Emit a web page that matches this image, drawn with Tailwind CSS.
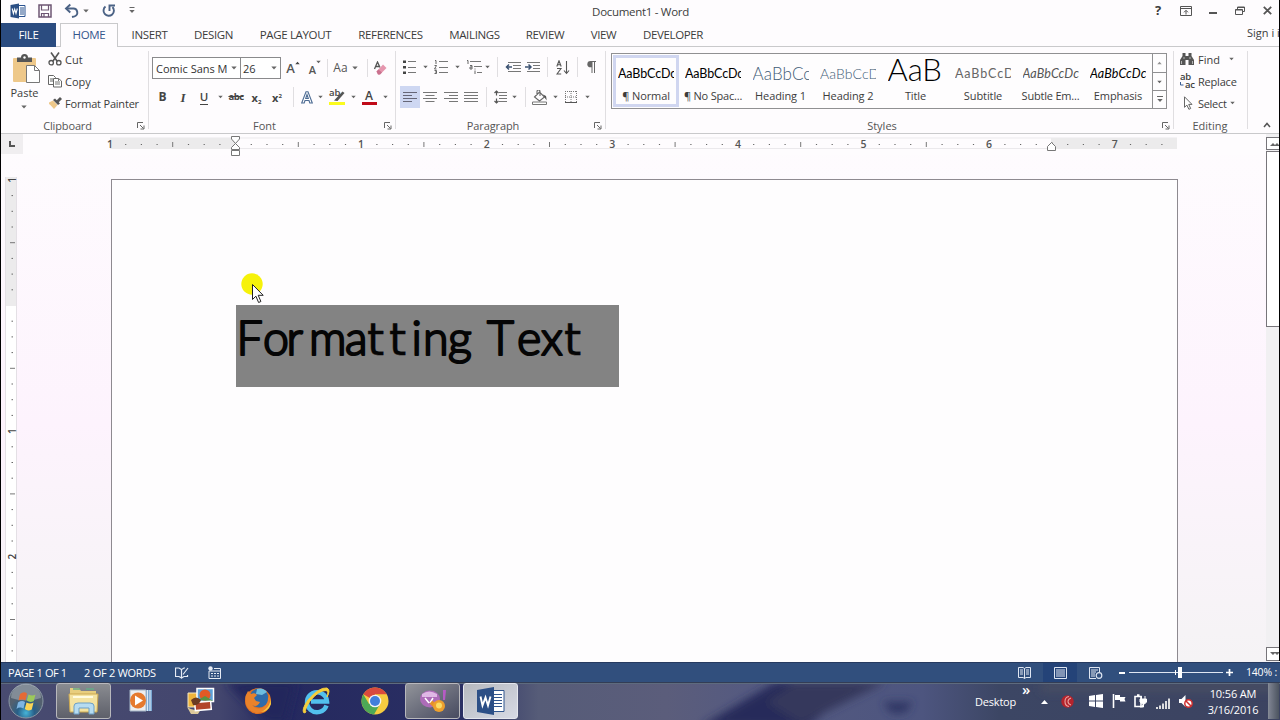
<!DOCTYPE html>
<html lang="en">
  <head>
    <meta charset="UTF-8" />
    <meta name="viewport" content="width=device-width, initial-scale=1.0" />
    <title>Document1 - Word</title>
    <script src="https://cdn.jsdelivr.net/npm/@tailwindcss/browser@4"></script>
  </head>
  <body class="w-[1280px] h-[720px] overflow-hidden bg-[#fefcfe] font-['Open_Sans','Noto_Sans',sans-serif] text-[11px] leading-none text-[#3c3c3c]">
    <!-- Shared icons -->
    <svg class="hidden">
      <symbol id="caret" viewBox="0 0 6 4"><path d="M0.3 0.4h5.4L3 3.6z" fill="#666" /></symbol>
      <symbol id="launcher" viewBox="0 0 8 8">
        <path d="M0.5 6V0.5H6M3 3l3.5 3.5M7 3.5V7H3.5" fill="none" stroke="#666" />
      </symbol>
    </svg>

    <div class="w-[1280px] h-[720px] border-l border-black flex flex-col relative">
      <!-- Title bar -->
      <header class="h-[23px] grid grid-cols-[1fr_auto_1fr] items-center">
        <div class="flex items-center h-5 -mt-[2px]">
          <div class="w-[34px] flex justify-center">
            <svg class="w-4 h-4" viewBox="0 0 16 16">
              <path d="M8 2.5h7v11H8z" fill="#fff" stroke="#2a5290" />
              <path d="M10 5h4M10 7h4M10 9h4M10 11h4" stroke="#2a5290" />
              <path d="M0.5 2L9 0.5v15L0.5 14z" fill="#2b4f85" />
              <path d="M2.2 5.5l1.2 5 1.3-4.4L6 10.500l1.300-5" fill="none" stroke="#fff" stroke-width="1.100" />
            </svg>
          </div>
          <div class="w-5 flex justify-center">
            <svg class="w-[14px] h-[14px]" viewBox="0 0 14 14">
              <path d="M1 1h12v12H1z" fill="#fff" stroke="#6d5673" stroke-width="1.500" />
              <path d="M3.500 1v5h7V1M3.500 13V9.500h7V13M6 10v3" fill="none" stroke="#6d5673" stroke-width="1.200" />
            </svg>
          </div>
          <div class="w-[34px] flex justify-center">
            <svg class="w-4 h-4" viewBox="0 0 16 16">
              <path d="M2.500 5.500h6.500a4 4 0 0 1 1.500 7.800L8 14" fill="none" stroke="#4b6285" stroke-width="1.900" />
              <path d="M6.300 1.500L2 5.500l4.300 4" fill="none" stroke="#4b6285" stroke-width="1.900" />
            </svg>
          </div>
          <svg class="w-[6px] h-1 -ml-[6px]"><use href="#caret" /></svg>
          <div class="w-10 flex justify-center">
            <svg class="w-4 h-4" viewBox="0 0 16 16">
              <path d="M4.500 3.500A5.200 5.200 0 1 0 11.500 4" fill="none" stroke="#4b6285" stroke-width="1.900" />
              <path d="M8.500 8V2.500H14" fill="none" stroke="#4b6285" stroke-width="1.900" />
            </svg>
          </div>
          <svg class="w-[6px] h-[7px]" viewBox="0 0 6 7"><path d="M0.500 0.500h5" stroke="#666" /><path d="M0.300 3h5.400L3 6z" fill="#666" /></svg>
        </div>
        <div class="text-[11.5px] tracking-[-0.3px] pt-px">Document1 - Word</div>
        <div class="flex items-center justify-end h-5 -mt-[2px]">
          <div class="w-7 text-center font-bold text-[13px]">?</div>
          <div class="w-[27px] flex justify-center">
            <svg class="w-3 h-[10px]" viewBox="0 0 12 10">
              <path d="M0.500 0.500h11v9H0.500zM0.500 2.500h11M6 8.500V4.500M4 6.300l2-2 2 2" fill="none" stroke="#555" />
            </svg>
          </div>
          <div class="w-[27px] flex justify-center"><div class="w-2 h-[2px] mt-[5px] bg-[#555]"></div></div>
          <div class="w-7 flex justify-center">
            <svg class="w-[10px] h-[9px]" viewBox="0 0 10 9">
              <path d="M2.500 3V1h7v4.500H7.500M2.500 1.500h7M0.500 3.500h7v5h-7zM0.500 4h7" fill="none" stroke="#555" />
            </svg>
          </div>
          <div class="w-[26px] flex justify-center">
            <svg class="w-[9px] h-[9px]" viewBox="0 0 9 9"><path d="M0.800 0.800l7.400 7.400M8.200 0.800L0.800 8.200" stroke="#555" stroke-width="1.800" /></svg>
          </div>
        </div>
      </header>

      <!-- Ribbon tabs -->
      <nav class="h-6 flex border-b border-[#c9c9cb] text-[11.5px] tracking-[-0.35px] relative">
        <div class="w-[55px] h-6 bg-[#2b4c80] text-white flex items-center justify-center">FILE</div>
        <div class="w-[58px] h-6 ml-1 border border-b-0 border-[#c9c9cb] bg-[#fefcfe] text-[#35568c] flex items-center justify-center pb-px">HOME</div>
        <div class="w-[63px] flex items-center justify-center">INSERT</div>
        <div class="w-[65px] flex items-center justify-center">DESIGN</div>
        <div class="w-[99px] flex items-center justify-center">PAGE LAYOUT</div>
        <div class="w-[91px] flex items-center justify-center">REFERENCES</div>
        <div class="w-[77px] flex items-center justify-center">MAILINGS</div>
        <div class="w-[64px] flex items-center justify-center">REVIEW</div>
        <div class="w-[53px] flex items-center justify-center">VIEW</div>
        <div class="w-[86px] flex items-center justify-center">DEVELOPER</div>
        <div class="ml-auto w-[33px] pt-1 text-[11px] tracking-normal whitespace-nowrap overflow-hidden">Sign i i</div>
      </nav>

      <!-- Ribbon -->
      <section class="h-[87px] flex border-b border-[#c9c9cb]">
        <!-- Clipboard -->
        <div class="w-[148px] flex flex-col relative">
          <div class="flex h-[71px]">
            <div class="w-[47px] flex flex-col items-center pt-[7px]">
              <svg class="w-7 h-[30px] ml-[3px]" viewBox="0 0 28 30">
                <rect x="1" y="4" width="23" height="24" rx="1" fill="#eec88a" />
                <path d="M5 3.500h4a3.500 3.500 0 0 1 7 0h4V8H5z" fill="#555" /><circle cx="12.500" cy="3.500" r="1.200" fill="#fff" />
                <path d="M14.500 11.500h8l5 5v12h-13z" fill="#fff" stroke="#777" /><path d="M22.500 11.500v5h5" fill="none" stroke="#777" />
              </svg>
              <span class="mt-[3px]">Paste</span>
              <svg class="w-[6px] h-1 mt-[7px] -ml-px"><use href="#caret" /></svg>
            </div>
            <div class="pt-px tracking-[-0.2px]">
              <div class="h-[22px] flex items-center gap-[3px]">
                <svg class="w-[14px] h-[14px]" viewBox="0 0 14 14">
                  <path d="M3 0.500l6 8.500M11 0.500L5 9" stroke="#555" stroke-width="1.600" />
                  <circle cx="3.200" cy="10.700" r="2.200" fill="none" stroke="#555" stroke-width="1.300" /><circle cx="10.800" cy="10.700" r="2.200" fill="none" stroke="#555" stroke-width="1.300" />
                </svg>
                <span class="tracking-normal">Cut</span>
              </div>
              <div class="h-[22px] flex items-center gap-[3px]">
                <svg class="w-[14px] h-[14px]" viewBox="0 0 14 14">
                  <path d="M0.500 1.500h5l2 2v7h-7zM2 5h3M2 7h3" fill="#fff" stroke="#666" />
                  <path d="M5.500 4.500h5l3 2.500v6h-8z" fill="#fff" stroke="#666" /><path d="M7 8h5M7 10h5M10.500 4.500V7" stroke="#777" fill="none" />
                </svg>
                <span class="tracking-normal">Copy</span>
              </div>
              <div class="h-[22px] flex items-center gap-[3px]">
                <svg class="w-[14px] h-[14px]" viewBox="0 0 14 14">
                  <path d="M1 6.500L5 4.500l4.500 4.500L6 13C4 10.500 3 9.500 1 8z" fill="#eec88a" />
                  <path d="M5 4l2-1.500 5 5L10 9z" fill="#555" /><path d="M8 5l4-4 2 2-4 4z" fill="#555" />
                </svg>
                <span>Format Painter</span>
              </div>
            </div>
          </div>
          <div class="flex h-[15px] items-center">
            <span class="flex-1 text-center text-[#555] pr-[3px] tracking-[-0.15px]">Clipboard</span>
            <svg class="w-2 h-2 mr-1"><use href="#launcher" /></svg>
          </div>
          <div class="absolute right-0 top-1 h-[78px] w-px bg-[#e0dee1]"></div>
        </div>

        <!-- Font -->
        <div class="w-[247px] flex flex-col relative">
          <div class="h-[71px] pl-[3px]">
            <div class="h-[22px] mt-[10px] flex items-center">
              <div class="w-[89px] -mr-px h-[22px] border border-[#8a8a8c] bg-white flex items-center pl-[3px] text-[#333]">
                <span class="w-[75px] whitespace-nowrap">Comic Sans M</span><svg class="w-[6px] h-1"><use href="#caret" /></svg>
              </div>
              <div class="w-[41px] h-[22px] border border-[#8a8a8c] bg-white flex items-center justify-between pl-[2px] pr-[3px] text-[#333]">
                <span>26</span><svg class="w-[6px] h-1"><use href="#caret" /></svg>
              </div>
              <div class="w-[24px] flex justify-center text-[13px] font-semibold text-[#555]">A<svg class="w-[5px] h-[4px] -mt-px" viewBox="0 0 6 4"><path d="M0.300 3.600h5.400L3 0.400z" fill="#444" /></svg></div>
              <div class="w-[20px] flex justify-center text-[11px] font-semibold text-[#555] pt-[2px]">A<svg class="w-[5px] h-1 -mt-1"><use href="#caret" /></svg></div>
              <div class="w-1 flex justify-center"><div class="w-px h-[18px] bg-[#e0dee1]"></div></div>
              <div class="w-[23px] text-center text-[12px] text-[#555]">Aa</div>
              <svg class="w-[6px] h-1"><use href="#caret" /></svg>
              <div class="w-3 ml-[3px] flex justify-center"><div class="w-px h-[18px] bg-[#e0dee1]"></div></div>
              <svg class="w-[15px] h-[15px]" viewBox="0 0 15 15">
                <path d="M1.500 8L4.500 1l2.500 5.500M2.500 5.500h4" fill="none" stroke="#555" stroke-width="1.300" />
                <path d="M3.500 10.500L10 3.500l3.500 3.500L7 13.500H5z" fill="#e596ae" /><path d="M3.500 10.500L5.500 8.500l3.500 3L7 13.500H5z" fill="#c9718e" />
              </svg>
            </div>
            <div class="h-[22px] mt-[7px] flex items-center text-[#444]">
              <div class="w-[21px] text-center font-bold text-[12px]">B</div>
              <div class="w-5 text-center font-['Liberation_Serif',serif] font-bold italic text-[13px]">I</div>
              <div class="w-[22px] text-center font-semibold text-[11.5px]"><span class="border-b border-[#444]">U</span></div>
              <div class="w-[10px] flex justify-center"><svg class="w-[5px] h-1"><use href="#caret" /></svg></div>
              <div class="w-[22px] text-center font-bold text-[9.5px] tracking-[-0.5px] line-through">abc</div>
              <div class="w-[19px] text-center font-bold text-[11px] whitespace-nowrap">x<span class="text-[6px] relative top-[2px]">2</span></div>
              <div class="w-[22px] text-center font-bold text-[11px] whitespace-nowrap">x<span class="text-[6px] relative -top-1">2</span></div>
              <div class="w-[10px] flex justify-center"><div class="w-px h-5 bg-[#e0dee1]"></div></div>
              <div class="w-[17px] flex justify-center">
                <svg class="w-3 h-[13px]" viewBox="0 0 12 13"><path d="M0.700 12L5 0.800h2L11.300 12H8.800L8 9.500H4L3.200 12zM4.700 7.500h2.600L6 3.500z" fill="#fff" stroke="#4e6c94" stroke-width="1.100" /></svg>
              </div>
              <div class="w-[10px] flex justify-center"><svg class="w-[5px] h-1"><use href="#caret" /></svg></div>
              <div class="w-6 flex justify-center">
                <div class="w-4 h-[15px] relative">
                  <span class="absolute left-0 -top-[2px] text-[9.5px] font-semibold">ab</span>
                  <svg class="absolute inset-0 w-4 h-[15px]" viewBox="0 0 16 15"><path d="M5 10.500L13.500 1.500l2 1.500L8.500 11z" fill="#555" /><path d="M0 12h16v3H0z" fill="#fbfb1e" /></svg>
                </div>
              </div>
              <div class="w-[9px] flex justify-center"><svg class="w-[5px] h-1"><use href="#caret" /></svg></div>
              <div class="w-[22px] flex justify-center">
                <div class="w-[15px] h-[15px] border-b-[3px] border-[#c00a18] text-center text-[12px] font-semibold leading-[11px]">A</div>
              </div>
              <div class="w-[10px] flex justify-center"><svg class="w-[5px] h-1"><use href="#caret" /></svg></div>
            </div>
          </div>
          <div class="flex h-[15px] items-center">
            <span class="flex-1 text-center text-[#555] pr-[4px]">Font</span>
            <svg class="w-2 h-2 mr-1"><use href="#launcher" /></svg>
          </div>
          <div class="absolute right-0 top-1 h-[78px] w-px bg-[#e0dee1]"></div>
        </div>

        <!-- Paragraph -->
        <div class="w-[210px] flex flex-col relative">
          <div class="h-[71px] pl-1">
            <div class="h-[22px] mt-[9px] flex items-center">
              <div class="w-[18px] flex justify-center">
                <svg class="w-[13px] h-[14px]" viewBox="0 0 13 14"><path d="M0 0.500h3v2.500H0zM0 6h3v2.500H0zM0 11.500h3V14H0z" fill="#444" /><path d="M5 1.500h8M5 7.500h8M5 12.500h8" stroke="#777" /></svg>
              </div>
              <div class="w-[14px] flex justify-center"><svg class="w-[5px] h-1"><use href="#caret" /></svg></div>
              <div class="w-[18px] flex justify-center">
                <svg class="w-[14px] h-[14px]" viewBox="0 0 14 14"><path d="M1 0.500h1V4M0.500 5.500h2L0.500 9h2M0.500 10.500h2v3h-2M1 12h1" fill="none" stroke="#555" stroke-width="0.900" /><path d="M5 1.500h9M5 7.500h9M5 12.500h9" stroke="#777" /></svg>
              </div>
              <div class="w-[14px] flex justify-center"><svg class="w-[5px] h-1"><use href="#caret" /></svg></div>
              <div class="w-[19px] flex justify-center">
                <svg class="w-4 h-[14px]" viewBox="0 0 16 14"><path d="M1 0.500h1V4M4 5.500h2V9H4V7h2M9 8.500v1M9 10.500V14" fill="none" stroke="#555" stroke-width="0.900" /><path d="M4 1.500h11M8 6.500h8M11 12.500h5" stroke="#777" /></svg>
              </div>
              <div class="w-2 flex justify-center"><svg class="w-[5px] h-1"><use href="#caret" /></svg></div>
              <div class="w-[13px] flex justify-center"><div class="w-px h-5 bg-[#e0dee1]"></div></div>
              <div class="w-[17px] flex justify-center">
                <svg class="w-4 h-[10px]" viewBox="0 0 16 10"><path d="M3 0.500h13M8 3.500h8M8 6.500h8M3 9.500h13" stroke="#777" /><path d="M7 5H1.500M4 2.500L1.500 5L4 7.500" stroke="#3c5272" stroke-width="1.500" fill="none" /></svg>
              </div>
              <div class="w-[24px] flex justify-center">
                <svg class="w-4 h-[10px]" viewBox="0 0 16 10"><path d="M2 0.500h13M8 3.500h7M8 6.500h7M2 9.500h13" stroke="#777" /><path d="M0 5h6M3.500 2.500L6 5L3.500 7.500" stroke="#3c5272" stroke-width="1.500" fill="none" /></svg>
              </div>
              <div class="w-[5px] flex justify-center"><div class="w-px h-5 bg-[#e0dee1]"></div></div>
              <div class="w-[25px] flex justify-center">
                <svg class="w-[14px] h-[15px]" viewBox="0 0 14 15"><path d="M0.800 6.500L3 0.800l2.200 5.700M1.500 4.800h3M1 8.500h4L1 14h4.200M10.500 1v12M8 10.500l2.500 3 2.500-3" fill="none" stroke="#555" stroke-width="1.100" /></svg>
              </div>
              <div class="w-1 flex justify-center"><div class="w-px h-5 bg-[#e0dee1]"></div></div>
              <div class="w-6 flex justify-center">
                <svg class="w-[9px] h-3" viewBox="0 0 9 12"><path d="M5 0H3.500a3 3 0 0 0 0 6.300H5z" fill="#666" /><path d="M4.500 0.500H9M5 0v12M7.500 0v12" stroke="#666" fill="none" /></svg>
              </div>
            </div>
            <div class="h-[22px] mt-2 flex items-center">
              <div class="w-5 h-[22px] flex items-center justify-center bg-[#ced7f2]">
                <svg class="w-[14px] h-[10px]" viewBox="0 0 14 10"><path d="M0 0.500h14M0 3.500h9M0 6.500h14M0 9.500h9" stroke="#667" /></svg>
              </div>
              <div class="w-5 flex justify-center"><svg class="w-[14px] h-[10px]" viewBox="0 0 14 10"><path d="M0 0.500h14M2.500 3.500h9M0 6.500h14M2.500 9.500h9" stroke="#777" /></svg></div>
              <div class="w-[21px] flex justify-center"><svg class="w-[14px] h-[10px]" viewBox="0 0 14 10"><path d="M0 0.500h14M5 3.500h9M0 6.500h14M5 9.500h9" stroke="#777" /></svg></div>
              <div class="w-5 flex justify-center"><svg class="w-[14px] h-[10px]" viewBox="0 0 14 10"><path d="M0 0.500h14M0 3.500h14M0 6.500h14M0 9.500h14" stroke="#777" /></svg></div>
              <div class="w-[10px] flex justify-center"><div class="w-px h-5 bg-[#e0dee1]"></div></div>
              <div class="w-[18px] flex justify-center">
                <svg class="w-[13px] h-[14px]" viewBox="0 0 13 14"><path d="M5 2.500h8M5 5.500h8M5 8.500h8M5 11.500h8" stroke="#777" /><path d="M2.500 1v4.500M0.500 3l2-2 2 2M2.500 8.500V13M0.500 11l2 2 2-2" fill="none" stroke="#555" stroke-width="1.200" /></svg>
              </div>
              <div class="w-[10px] flex justify-center"><svg class="w-[5px] h-1"><use href="#caret" /></svg></div>
              <div class="w-3 flex justify-center"><div class="w-px h-5 bg-[#e0dee1]"></div></div>
              <div class="w-[18px] flex justify-center">
                <svg class="w-4 h-[15px]" viewBox="0 0 16 15"><path d="M2.500 7L7.500 2l5 5-5 4zM5 5V1.500a1.500 1.500 0 0 1 3 0V6" fill="none" stroke="#666" stroke-width="1.100" /><path d="M11 4.500l3 1.500 0.800 4.500-2.300-3z" fill="#555" /><path d="M0.500 12h14v2.500H0.500z" fill="#fff" stroke="#777" /></svg>
              </div>
              <div class="w-3 flex justify-center"><svg class="w-[5px] h-1"><use href="#caret" /></svg></div>
              <div class="w-5 flex justify-center">
                <svg class="w-3 h-3" viewBox="0 0 12 12"><path d="M0.500 0v12M11.500 0v12M0 0.500h12M6 0v12M0 6h12" stroke="#777" stroke-dasharray="1 1" /><path d="M0 11.500h12" stroke="#555" /></svg>
              </div>
              <div class="w-3 flex justify-center"><svg class="w-[5px] h-1"><use href="#caret" /></svg></div>
            </div>
          </div>
          <div class="flex h-[15px] items-center">
            <span class="flex-1 text-center text-[#555] pr-[4px] tracking-[-0.1px]">Paragraph</span>
            <svg class="w-2 h-2 mr-1"><use href="#launcher" /></svg>
          </div>
          <div class="absolute right-0 top-1 h-[78px] w-px bg-[#e0dee1]"></div>
        </div>

        <!-- Styles -->
        <div class="w-[568px] flex flex-col relative">
          <div class="h-[71px] pl-[5px] pt-[6px]">
            <div class="w-[556px] h-[56px] border border-[#909092] bg-[#fefdfe] flex text-[11px] tracking-[-0.1px] text-center whitespace-nowrap">
              <div class="w-[66px] h-[52px] ml-px mt-px border-[3px] border-[#d0d6f0] pt-[7px]">
                <div class="w-[56px] h-[18px] mx-auto overflow-hidden text-left text-[12.5px] leading-[18px] text-black font-[Lato] tracking-[-0.1px]">AaBbCcDc</div>
                <div class="mt-[7px]">¶ Normal</div>
              </div>
              <div class="w-[68px] pt-[11px]">
                <div class="w-[56px] h-[18px] mx-auto overflow-hidden text-left text-[12.5px] leading-[18px] text-black font-[Lato] tracking-[-0.1px]">AaBbCcDc</div>
                <div class="mt-[7px] tracking-[-0.2px]">¶ No Spac...</div>
              </div>
              <div class="w-[67px] pt-[11px]">
                <div class="w-[56px] h-[18px] mx-auto overflow-hidden text-left text-[17px] leading-[18px] text-[#3f5c76] font-[Lato] font-light tracking-[0.1px]">AaBbCc</div>
                <div class="mt-[7px]">Heading 1</div>
              </div>
              <div class="w-[68px] pt-[11px]">
                <div class="w-[56px] h-[18px] mx-auto overflow-hidden text-left text-[14px] leading-[18px] text-[#3f5c76] font-[Lato] font-light tracking-[0.1px]">AaBbCcD</div>
                <div class="mt-[7px]">Heading 2</div>
              </div>
              <div class="w-[67px] pt-[3px]">
                <div class="w-[56px] h-[26px] mx-auto overflow-hidden text-left text-[31px] leading-[25px] text-black font-[Lato] font-light">AaB</div>
                <div class="mt-[7px]">Title</div>
              </div>
              <div class="w-[68px] pt-[11px]">
                <div class="w-[56px] h-[18px] mx-auto overflow-hidden text-left text-[12.5px] leading-[18px] text-[#666] font-[Lato] tracking-[0.9px]">AaBbCcD</div>
                <div class="mt-[7px]">Subtitle</div>
              </div>
              <div class="w-[67px] pt-[11px]">
                <div class="w-[56px] h-[18px] mx-auto overflow-hidden text-left text-[12.5px] leading-[18px] text-[#555] font-[Lato] italic tracking-[0.1px]">AaBbCcDc</div>
                <div class="mt-[7px] tracking-[-0.2px]">Subtle Em...</div>
              </div>
              <div class="w-[68px] pt-[11px]">
                <div class="w-[56px] h-[18px] mx-auto overflow-hidden text-left text-[12.5px] leading-[18px] text-black font-[Lato] italic tracking-[0.1px]">AaBbCcDc</div>
                <div class="mt-[7px]">Emphasis</div>
              </div>
              <div class="ml-auto w-[14px] border-l border-[#909092] flex flex-col">
                <div class="h-[18px] flex items-center justify-center"><svg class="w-[5px] h-1 rotate-180 opacity-70"><use href="#caret" /></svg></div>
                <div class="h-[18px] border-t border-[#909092] flex items-center justify-center"><svg class="w-[5px] h-1"><use href="#caret" /></svg></div>
                <div class="h-[18px] border-t border-[#909092] flex items-center justify-center"><svg class="w-[6px] h-[7px]" viewBox="0 0 6 7"><path d="M0 0.500h6" stroke="#666" /><path d="M0.300 3h5.400L3 6z" fill="#666" /></svg></div>
              </div>
            </div>
          </div>
          <div class="flex h-[15px] items-center">
            <span class="flex-1 text-center text-[#555] pr-[4px]">Styles</span>
            <svg class="w-2 h-2 mr-1"><use href="#launcher" /></svg>
          </div>
          <div class="absolute right-0 top-1 h-[78px] w-px bg-[#e0dee1]"></div>
        </div>

        <!-- Editing -->
        <div class="w-[74px] flex flex-col relative">
          <div class="h-[71px] pl-[6px] pt-px">
            <div class="h-[22px] flex items-center">
              <svg class="w-[14px] h-3 mr-[4px]" viewBox="0 0 14 12"><path d="M2.500 0h3v3h3V0h3v3l2.500 4v5H8.500V7h-3v5H0V7l2.500-4z" fill="#555" /><path d="M1.500 8v3M12.500 8v3M4 4v2M10 4v2" stroke="#ccc" stroke-width="0.800" /></svg>
              <span class="w-[31px]">Find</span><svg class="w-[5px] h-1"><use href="#caret" /></svg>
            </div>
            <div class="h-[22px] flex items-center">
              <div class="w-[14px] h-4 mr-[4px] text-[9.5px] leading-[8px] font-semibold tracking-[-0.3px] relative">
                <div>ab</div>
                <div class="pl-[5px]">ac</div>
                <svg class="absolute left-0 top-[9px] w-1 h-[5px]" viewBox="0 0 4 5"><path d="M0.500 0v3h3" stroke="#3b5f96" fill="none" /></svg>
              </div>
              <span class="tracking-[-0.2px]">Replace</span>
            </div>
            <div class="h-[22px] flex items-center">
              <svg class="w-[14px] h-[14px] mr-[4px]" viewBox="0 0 14 14"><path d="M4.500 0.800v10.500l2.400-2.200 2 4.200 1.800-0.800-2-4.100h3.300z" fill="#fff" stroke="#666" /></svg>
              <span class="w-[31px] tracking-[-0.3px]">Select</span><svg class="w-[5px] h-1 ml-px"><use href="#caret" /></svg>
            </div>
          </div>
          <div class="flex h-[15px] items-center"><span class="flex-1 text-center text-[#555] pr-[2px]">Editing</span></div>
          <div class="absolute right-0 top-1 h-[78px] w-px bg-[#e0dee1]"></div>
        </div>
        <div class="flex-1 flex items-end pl-[15px] pb-[5px]">
          <svg class="w-2 h-[6px]" viewBox="0 0 8 6"><path d="M1 5l3-3.500L7 5" fill="none" stroke="#555" stroke-width="1.500" /></svg>
        </div>
      </section>

      <!-- Document area -->
      <main class="h-[528px] flex bg-linear-to-b from-[#fefcfe] via-[#fdf3fd] via-55% to-[#f5f3f5]">
        <div class="flex-1 flex flex-col">
          <div class="h-[21px] flex bg-[#fefcfe]">
            <div class="w-[22px] h-[20px] bg-[#f0eef0] flex items-center justify-center">
              <svg class="w-[6px] h-[6px]" viewBox="0 0 6 6"><path d="M1 0v5h5" fill="none" stroke="#555" stroke-width="2" /></svg>
            </div>
            <svg id="h-ruler" class="w-[1200px] h-[25px] shrink-0 font-['Open_Sans',sans-serif]"></svg>
          </div>
          <div class="h-[507px] flex">
            <svg id="v-ruler" class="w-[17px] h-[507px] font-['Open_Sans',sans-serif]"></svg>
            <!-- Page -->
            <div class="ml-[93px] mt-6 w-[1067px] border border-b-0 border-[#8e8a90] bg-[#fefdfe] pt-[125px] pl-[124px]">
              <div class="w-[383px] h-[82px] bg-[#838383]">
                <svg class="w-[383px] h-[82px] font-[Lato] font-light" font-size="46.500">
                  <text y="50" fill="#050505" stroke="#050505" stroke-width="2.200" stroke-linejoin="round"
                    x="0.500 27 50.500 73 109 131 153 175.500 187 212 236 251 281 305 328"
                    >Forma<tspan class="font-['DejaVu_Sans'] font-normal" font-size="44" stroke-width="0.400">tt</tspan>ing Tex<tspan class="font-['DejaVu_Sans'] font-normal" font-size="44" stroke-width="0.400">t</tspan></text>
                </svg>
              </div>
            </div>
          </div>
        </div>
        <!-- Scrollbar -->
        <div class="w-[14px] h-[528px] bg-[#f1f0f2] flex flex-col pt-[3px]">
          <div class="h-[13px] border border-r-0 border-[#77757a] bg-white flex items-center justify-end"><svg class="w-[10px] h-1" viewBox="0 0 10 4"><path d="M0 4l3-3 2 2 2-2 3 3z" fill="#666" /></svg></div>
          <div class="h-[176px] mt-px border border-r-0 border-[#77757a] bg-white"></div>
          <div class="h-[14px] mt-auto mb-px border border-r-0 border-[#77757a] bg-white flex items-center justify-end"><svg class="w-[10px] h-1" viewBox="0 0 10 4"><path d="M0 0l3 3 2-2 2 2 3-3z" fill="#666" /></svg></div>
        </div>
      </main>

      <!-- Status bar -->
      <footer class="h-5 bg-[#314f7d] border-t border-[#263a60] flex items-center text-white text-[11px]">
        <span class="ml-[7px] w-[76px] whitespace-nowrap tracking-[-0.4px] pb-px">PAGE 1 OF 1</span>
        <span class="w-[91px] whitespace-nowrap tracking-[-0.25px] pb-px">2 OF 2 WORDS</span>
        <svg class="w-[14px] h-3" viewBox="0 0 14 12"><path d="M6.500 11L4 9.500H0.500V1H4l2.500 1.500zV2.500L9 1h1M6.500 11L9 9.500h3.500V8M8 7.500l5-6.500" fill="none" stroke="#e6ebf4" stroke-width="1.200" /></svg>
        <svg class="w-[13px] h-[13px] ml-[19px]" viewBox="0 0 13 13"><path d="M1 5h11.500v7.500H1zM6 2.500h6.500V5" fill="none" stroke="#e6ebf4" /><circle cx="2.500" cy="2.500" r="2.200" fill="#e6ebf4" /><path d="M3 7.500h8M3 10h8" stroke="#e6ebf4" stroke-dasharray="2 1" /></svg>
        <svg class="w-[13px] h-3 ml-auto" viewBox="0 0 13 12"><path d="M6.500 11.500V1.500L5 0.500H0.500v10H5zl1.500-1h4.500v-10H8L6.500 1.500M2 3h3M2 5h3M2 7h3M8 3h3M8 5h3M8 7h3" fill="none" stroke="#dfe6f2" /></svg>
        <div class="w-[34px] h-[19px] ml-[12px] bg-[#244378] flex items-center justify-center">
          <svg class="w-[13px] h-3" viewBox="0 0 13 12"><path d="M0.500 0.500h12v11H0.500zM2 3h9M2 5h9M2 7h9M2 9h9" fill="none" stroke="#dfe6f2" /></svg>
        </div>
        <svg class="w-[14px] h-3 ml-[12px]" viewBox="0 0 14 12"><path d="M7 11.500H0.500v-11h10V5M2 3h7M2 5h5M2 7h4M2 9h4" fill="none" stroke="#dfe6f2" /><circle cx="10" cy="8.500" r="2.800" fill="#314f7d" stroke="#dfe6f2" stroke-width="1.200" /></svg>
        <div class="w-[6px] h-[2px] ml-[16px] bg-white"></div>
        <div class="w-[94px] h-[11px] ml-1 flex items-center relative">
          <div class="w-full h-px bg-[#dfe6f2]"></div>
          <div class="absolute left-[46px] top-[3px] w-px h-[5px] bg-white"></div>
          <div class="absolute left-[49px] top-0 w-1 h-[11px] bg-white"></div>
        </div>
        <svg class="w-[7px] h-[7px] ml-[3px]" viewBox="0 0 7 7"><path d="M3.500 0v7M0 3.500h7" stroke="#fff" stroke-width="1.700" /></svg>
        <span class="ml-[13px] w-[34px] whitespace-nowrap text-[10.5px] tracking-[-0.2px]">140% :</span>
      </footer>

      <!-- Taskbar -->
      <div class="h-[38px] relative overflow-hidden bg-[#4d5479]">
        <svg class="absolute inset-0 w-[1280px] h-[38px]" viewBox="0 0 1280 38">
          <defs>
            <filter id="soft" x="-20%" y="-50%" width="140%" height="200%"><feGaussianBlur stdDeviation="4" /></filter>
            <linearGradient id="base" x1="0" x2="1">
              <stop offset="0" stop-color="#484b70" /><stop offset="0.17" stop-color="#43466e" /><stop offset="0.22" stop-color="#25295f" /><stop offset="0.36" stop-color="#2a2f63" />
              <stop offset="0.42" stop-color="#565c78" /><stop offset="0.52" stop-color="#5b5d7b" /><stop offset="0.58" stop-color="#555a80" /><stop offset="0.72" stop-color="#4d557f" /><stop offset="0.78" stop-color="#3c4664" /><stop offset="1" stop-color="#3c4361" />
            </linearGradient>
          </defs>
          <rect width="1280" height="38" fill="url(#base)" />
          <g filter="url(#soft)">
            <path d="M225 0h70l-10 40h-20z" fill="#20255c" />
            <path d="M700 44L775 0h55l10 16-35 30z" fill="#272a5a" />
            <path d="M800 42L885 0h-90l-30 20z" fill="#34375b" />
            <path d="M882 20h30l-8 11h-14z" fill="#2d3464" />
            <path d="M1040 0h240v10h-240z" fill="#474d63" />
          </g>
          <path d="M0 0.500h1280" stroke="#333d55" /><path d="M0 1.500h1280" stroke="#5e6b7e" />
        </svg>
        <div class="relative h-[38px] flex items-center text-white">
          <!-- Start -->
          <div class="w-[55px] flex justify-center pr-[6px]">
            <svg class="w-9 h-9" viewBox="0 0 36 36">
              <defs><radialGradient id="orb" cy="0.85"><stop offset="0" stop-color="#46b4d8" /><stop offset="0.500" stop-color="#285f88" /><stop offset="1" stop-color="#53606f" /></radialGradient></defs>
              <circle cx="18" cy="18" r="17" fill="url(#orb)" stroke="#8b98a5" /><path d="M3 15a15 14 0 0 1 30 0q-15 5-30 0z" fill="#fff" opacity="0.280" />
              <path d="M12 11q4-3 7-0.500l-1.500 7q-3-2-7 0z" fill="#e56a35" /><path d="M20.500 11.500q4 2 7 0l-1.700 6.500q-4 2-7-0.500z" fill="#9cc95b" />
              <path d="M10 19.500q4-2.500 7-0.500l-1.500 6.500q-4-2-7 0.500z" fill="#7eb5e2" /><path d="M18.500 19.500q4 2 7 0l-1.700 7q-4 2-7-0.500z" fill="#fbd455" />
            </svg>
          </div>
          <div class="w-[55px] h-9 rounded-[3px] border border-[#b8b8bc] bg-linear-to-b from-[#8a8c91] to-[#5e606a] flex items-center justify-center">
            <svg class="w-8 h-[30px]" viewBox="0 0 32 30">
              <path d="M2 6V2h9l2 3h15v5H2z" fill="#e8ce7e" /><path d="M5 3h7M18 3h8" stroke="#66aa88" stroke-width="1.500" />
              <path d="M1 8h29l-1 18H2z" fill="#f4e3a1" stroke="#cda950" /><path d="M5 11h20" stroke="#fffbe0" stroke-width="2" />
              <path d="M6 28V20q0-3 4-3h12q4 0 4 3v8h-5v-6H11v6z" fill="#b6dcf1" stroke="#6c9fc5" />
            </svg>
          </div>
          <div class="w-[59px] flex justify-center">
            <svg class="w-6 h-6" viewBox="0 0 24 24">
              <path d="M5 1h18v21H5z" fill="#7aa6d1" /><path d="M18.500 1v21M21 1v21" stroke="#dcebf7" />
              <path d="M1 1h16v21H1z" fill="#eceef0" stroke="#a4b5c7" /><circle cx="9" cy="11.500" r="8" fill="#e57a2f" /><path d="M6 6.500l8 5-8 5z" fill="#fff" />
            </svg>
          </div>
          <div class="w-[59px] flex justify-center">
            <svg class="w-[30px] h-7" viewBox="0 0 30 28">
              <path d="M3 6h10v14H3z" fill="#eeb43c" stroke="#f3e7c2" /><path d="M2 20q7 5 14 2l-3 5H6z" fill="#dcc99b" />
              <path d="M12 1.500h16.500v13H12z" fill="#5da0d8" stroke="#fff" stroke-width="1.500" /><circle cx="20" cy="8" r="5.500" fill="#e25a25" /><path d="M13 13l7-4 8 5z" fill="#5a9443" />
              <path d="M10 15h16v8H10z" fill="#b2452a" stroke="#fff" stroke-width="1.500" transform="rotate(-5 17 19)" /><path d="M6 13q5-5 10 0-2 6-8 5z" fill="#6b3b21" />
            </svg>
          </div>
          <div class="w-[58px] flex justify-center">
            <svg class="w-7 h-7" viewBox="0 0 28 28">
              <circle cx="14" cy="14" r="13" fill="#e2701f" /><circle cx="15" cy="11" r="9.500" fill="#2f6ba9" /><path d="M13 2q6-2 10 3l-5 3-6-1z" fill="#6dbde0" />
              <path d="M1.500 9L4 4l3 3q4-2 6 1l-3 3 2 3 4 1q-3 6-8 3 5 6 12 2 4-3 4-9l2-4q1 18-13 19Q0 24 1.500 9z" fill="#e9822b" /><path d="M26 8q2 12-9 17 7 0 10-8z" fill="#f9cb3d" />
            </svg>
          </div>
          <div class="w-[58px] flex justify-center">
            <svg class="w-[30px] h-[30px]" viewBox="0 0 30 30">
              <path d="M25.500 19.500A10 10 0 1 1 26 15.500H10" fill="none" stroke="#52c0ee" stroke-width="4.500" />
              <path d="M3 27Q0 24 7 14Q18 1 26 2q4 2 0 9q2-6-1-6.500Q18 4 9 15 3 24 5 26z" fill="#f6ce3b" stroke="#f6ce3b" />
            </svg>
          </div>
          <div class="w-[59px] flex justify-center">
            <svg class="w-7 h-7" viewBox="0 0 28 28">
              <circle cx="14" cy="14" r="13.500" fill="#f5cb40" /><path d="M14 14L2.300 7.300A13.500 13.500 0 0 1 25.700 7.300H14z" fill="#d94a3d" />
              <path d="M2.300 7.300A13.500 13.500 0 0 0 13 27.500L19 17 14 14 8 17z" fill="#4da856" /><circle cx="14" cy="14" r="6.300" fill="#f4f4f4" /><circle cx="14" cy="14" r="5" fill="#427fdb" />
            </svg>
          </div>
          <div class="w-[55px] ml-px h-9 rounded-[3px] border border-[#b8b8bc] bg-linear-to-br from-[#92949a] to-[#484b60] flex items-center justify-center">
            <svg class="w-[28px] h-6" viewBox="0 0 28 24">
              <ellipse cx="11" cy="10" rx="10" ry="8.500" fill="#ad6cb8" /><path d="M3 5q7-5 15 0v3H3z" fill="#dfb8e5" /><path d="M6 9l4 5M14 9l-3 5" stroke="#fff" stroke-width="1.500" /><path d="M24 1h3l-1 10h-2z" fill="#b65bc4" />
              <path d="M12 13l5 5" stroke="#e5902a" stroke-width="4" /><circle cx="20" cy="17" r="6" fill="#eda02e" /><circle cx="20" cy="16.500" r="3" fill="#fbdc66" />
            </svg>
          </div>
          <div class="w-[55px] ml-[3px] h-9 rounded-[3px] border border-[#e5e7ee] bg-linear-to-br from-[#b5b8be] to-[#d7dae5] flex items-center justify-center">
            <svg class="w-7 h-[28px]" viewBox="0 0 28 28">
              <path d="M14 3.500h13v21H14z" fill="#fff" stroke="#31568f" /><path d="M17 7.500h8M17 10.500h8M17 13.500h8M17 16.500h8M17 19.500h8" stroke="#31568f" />
              <path d="M0 3L17 0v28L0 25z" fill="#2c4f86" /><path d="M3.500 9.500l2 9 3-8 2.500 8 2.500-9" fill="none" stroke="#fff" stroke-width="1.900" />
            </svg>
          </div>

          <!-- Tray -->
          <span class="ml-auto w-[47px] tracking-[-0.2px]">Desktop</span>
          <span class="w-[19px] -mt-[24px] text-[15px] font-semibold">»</span>
          <svg class="w-[7px] h-1 mt-[2px]" viewBox="0 0 7 4"><path d="M0 4h7L3.500 0z" fill="#fff" /></svg>
          <svg class="w-[13px] h-[13px] ml-[13px]" viewBox="0 0 13 13"><circle cx="6.500" cy="6.500" r="6.200" fill="#b4232c" /><path d="M8 1.500Q4 2 4 6.500T8 11.500M10 3Q7 4 7 6.500T10 10" fill="none" stroke="#e8a19f" stroke-width="1.100" /></svg>
          <svg class="w-[14px] h-[14px] ml-[15px]" viewBox="0 0 14 14"><path d="M0 2l6-1v5.500H0zM7 0.900L14 0v6.500H7zM0 7.500h6V13l-6-1zM7 7.500h7V14l-7-0.900z" fill="#fff" /></svg>
          <svg class="w-[14px] h-[14px] ml-[9px]" viewBox="0 0 14 14"><path d="M1.500 0v14" stroke="#fff" stroke-width="1.600" /><path d="M3 1h5v2h5.500l-1 2 1 2.500H8V6H3z" fill="#fff" /></svg>
          <svg class="w-[13px] h-[14px] ml-[8px]" viewBox="0 0 13 14"><path d="M1 2.500h6v10H1zM3 1h2.500" fill="none" stroke="#fff" stroke-width="1.600" /><path d="M6 5h6.500v3L10.500 10h-2L6 8zM7.500 2v3M11 2v3M9.500 10v3H6" fill="#fff" stroke="#fff" /></svg>
          <svg class="w-[14px] h-[11px] ml-[9px] mt-1" viewBox="0 0 14 11"><path d="M1 11V9M4 11V7.500M7 11V5.500M10 11V3M13 11V0.500" stroke="#eee" stroke-width="1.800" /></svg>
          <svg class="w-[14px] h-[14px] ml-[9px]" viewBox="0 0 14 14"><path d="M0 5h2.500L6.500 1v12l-4-4H0z" fill="#fff" /><circle cx="9.500" cy="9.500" r="3.700" fill="#fff" stroke="#cf2f2f" stroke-width="1.500" /><path d="M7 7l5 5" stroke="#cf2f2f" stroke-width="1.500" /></svg>
          <div class="w-[75px] pl-[5px] text-center leading-[16px] pt-px tracking-[-0.15px]">
            <div>10:56 AM</div>
            <div>3/16/2016</div>
          </div>
          <div class="w-[11px] h-9 mr-px border-l border-[#838994] bg-linear-to-r from-[#7d8290] to-[#4c5460]"></div>
        </div>
      </div>

      <!-- Mouse pointer with click highlight -->
      <svg class="absolute left-[239px] top-[272px] w-7 h-8" viewBox="0 0 28 32">
        <circle cx="12" cy="12" r="10.700" fill="#f6f20a" />
        <path d="M12.500 12.500v15l3.400-3.300 2.700 6.300 2.300-1-2.700-6.200h5z" fill="#fff" stroke="#222" />
      </svg>
      <div class="absolute right-0 top-0 w-px h-[661px] bg-black"></div>
    </div>

    <script>
      // Rulers: one inch is 125.6px, with a mark every eighth
      const INCH = 125.6;

      function marks(from, to, draw) {
        for (let i = from; i <= to; i++) {
          draw(i, i % 8 === 0 ? "number" : i % 4 === 0 ? "half" : "dot");
        }
      }

      let h = `<path d="M87 4h1067M87 14.500h1067" stroke="#ebe9ec"/><rect x="87" y="4" width="125" height="11" fill="#ecebec"/><rect x="1028" y="4" width="126" height="11" fill="#ecebec"/>`;
      marks(-8, 59, (i, kind) => {
        const x = 212.5 + (i * INCH) / 8;
        if (kind === "number" && i !== 0)
          h += `<text x="${x}" y="14" font-size="10.5" font-weight="600" text-anchor="middle" fill="#555">${Math.abs(i / 8)}</text>`;
        if (kind === "half") h += `<path d="M${x} 8v5" stroke="#777"/>`;
        if (kind === "dot") h += `<path d="M${x - 0.5} 10.500h1.200" stroke="#666"/>`;
      });
      h += `<path d="M208.500 2.500h8v2.500l-4 4.500-4-4.500zM208.500 15.500v-2l4-4 4 4v2zM208.500 16.500h8v5h-8z" fill="#fff" stroke="#777"/>`;
      h += `<path d="M1024.500 16.500v-4l4-4 4 4v4z" fill="#fff" stroke="#777"/>`;
      document.getElementById("h-ruler").innerHTML = h;

      let v = `<rect x="5" y="23" width="11" height="484" fill="#fff"/><rect x="5" y="22" width="11" height="129" fill="#ecebec"/><path d="M4.500 22v485M15.500 22v485" stroke="#e4e0e5"/>`;
      marks(-8, 22, (i, kind) => {
        const y = 150.5 + (i * INCH) / 8;
        if (kind === "number" && i !== 0)
          v += `<text transform="translate(14.500 ${y}) rotate(-90)" font-size="10" font-weight="600" text-anchor="middle" fill="#444">${Math.abs(i / 8)}</text>`;
        if (kind === "half") v += `<path d="M9 ${y}h5" stroke="#777"/>`;
        if (kind === "dot") v += `<path d="M10.500 ${y}h1.500" stroke="#666"/>`;
      });
      document.getElementById("v-ruler").innerHTML = v;
    </script>
  </body>
</html>
